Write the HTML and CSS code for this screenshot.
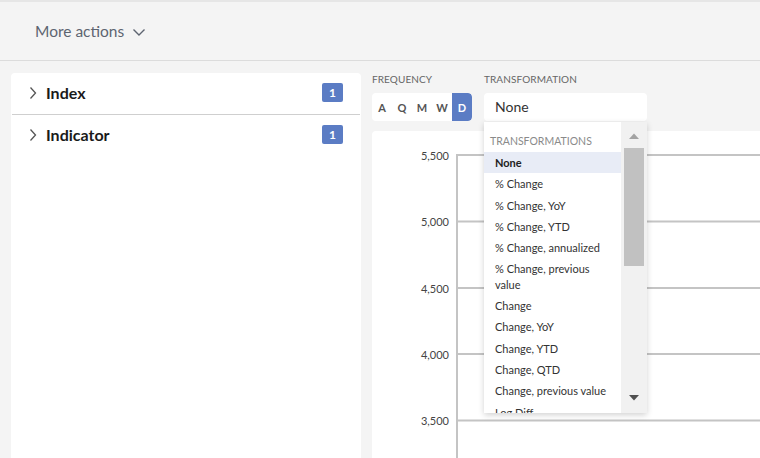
FILE: index.html
```html
<!DOCTYPE html>
<html lang="en">
<head>
<meta charset="utf-8">
<title>Series</title>
<link rel="stylesheet" href="styles.css">
</head>
<body>
<header class="topbar">
  <button class="more-actions">More actions
    <svg class="chev-down" width="14" height="9" viewBox="0 0 14 9"><path d="M1.5 1.5 L7 7 L12.5 1.5" fill="none" stroke="#5d6470" stroke-width="1.4"/></svg>
  </button>
</header>
<main class="main">
  <section class="panel">
    <div class="row">
      <svg class="chev-right" width="8" height="14" viewBox="0 0 8 14"><path d="M1.5 1.5 L6.5 7 L1.5 12.5" fill="none" stroke="#555" stroke-width="1.3"/></svg>
      <span class="row-title">Index</span>
      <span class="badge">1</span>
    </div>
    <div class="divider"></div>
    <div class="row">
      <svg class="chev-right" width="8" height="14" viewBox="0 0 8 14"><path d="M1.5 1.5 L6.5 7 L1.5 12.5" fill="none" stroke="#555" stroke-width="1.3"/></svg>
      <span class="row-title">Indicator</span>
      <span class="badge">1</span>
    </div>
  </section>
  <section class="work">
    <div class="controls">
      <div class="field">
        <div class="label">Frequency</div>
        <div class="freq">
          <span class="freq-btn">A</span>
          <span class="freq-btn">Q</span>
          <span class="freq-btn">M</span>
          <span class="freq-btn">W</span>
          <span class="freq-btn active">D</span>
        </div>
      </div>
      <div class="field transform">
        <div class="label">Transformation</div>
        <div class="select">None</div>
        <div class="dropdown">
          <div class="list">
            <div class="list-head">Transformations</div>
            <div class="item selected">None</div>
            <div class="item">% Change</div>
            <div class="item">% Change, YoY</div>
            <div class="item">% Change, YTD</div>
            <div class="item">% Change, annualized</div>
            <div class="item">% Change, previous<br>value</div>
            <div class="item">Change</div>
            <div class="item">Change, YoY</div>
            <div class="item">Change, YTD</div>
            <div class="item">Change, QTD</div>
            <div class="item">Change, previous value</div>
            <div class="item">Log Diff</div>
          </div>
          <div class="scrollbar">
            <svg class="arrow" width="10" height="6" viewBox="0 0 10 6"><path d="M0 6 L5 0.5 L10 6 Z" fill="#a3a3a3"/></svg>
            <div class="thumb-track"><div class="thumb"></div></div>
            <svg class="arrow" width="10" height="6" viewBox="0 0 10 6"><path d="M0 0 L5 5.5 L10 0 Z" fill="#505050"/></svg>
          </div>
        </div>
      </div>
    </div>
    <div class="chart-card">
      <svg class="chart" width="400" height="330" viewBox="0 0 400 330">
        <g stroke="#c4c4c4" stroke-width="2" fill="none">
          <line x1="85" y1="24" x2="400" y2="24"/>
          <line x1="85" y1="90.5" x2="400" y2="90.5"/>
          <line x1="85" y1="157" x2="400" y2="157"/>
          <line x1="85" y1="223" x2="400" y2="223"/>
          <line x1="85" y1="289.5" x2="400" y2="289.5"/>
          <line x1="85" y1="23" x2="85" y2="330"/>
        </g>
        <g class="ticks" text-anchor="end">
          <text x="77" y="29">5,500</text>
          <text x="77" y="95">5,000</text>
          <text x="77" y="162">4,500</text>
          <text x="77" y="228">4,000</text>
          <text x="77" y="294">3,500</text>
        </g>
      </svg>
    </div>
  </section>
</main>
</body>
</html>
```
FILE: styles.css
```css
* { box-sizing: border-box; }
html, body {
  margin: 0;
  height: 100%;
  overflow: hidden;
}
body {
  background: #f4f4f4;
  font-family: Lato, "Noto Sans", sans-serif;
  color: #333;
}
.topbar {
  height: 61px;
  border-top: 2px solid #e6e6e6;
  border-bottom: 1px solid #dcdcdc;
  display: flex;
  align-items: center;
  padding-left: 35px;
}
.more-actions {
  background: none;
  border: 0;
  padding: 0;
  font-family: inherit;
  font-size: 15.5px;
  color: #5d6470;
  display: flex;
  align-items: center;
  gap: 8px;
}
.chev-down { margin-top: 2px; }
.main {
  display: flex;
  gap: 11px;
  padding: 12px 0 0 11px;
  height: calc(100% - 61px);
}
.panel {
  width: 350px;
  background: #fff;
  border-radius: 4px 4px 0 0;
  flex-shrink: 0;
}
.row {
  height: 41px;
  display: flex;
  align-items: center;
  padding: 0 18px 2px 18px;
}
.chev-right { margin-right: 9px; }
.row-title {
  font-weight: 700;
  font-size: 16px;
  color: #1a1a1a;
  flex: 1;
}
.badge {
  width: 21px;
  height: 19px;
  background: #5b7cc4;
  color: #fff;
  border-radius: 2px;
  font-size: 12px;
  font-weight: 700;
  display: flex;
  align-items: center;
  justify-content: center;
}
.divider {
  height: 1px;
  background: #cfcfcf;
  margin: 0 1px;
}
.work {
  flex: 1;
  display: flex;
  flex-direction: column;
  gap: 10px;
  min-width: 0;
}
.controls {
  display: flex;
  gap: 12px;
}
.field { position: relative; }
.label {
  font-size: 10px;
  line-height: 12px;
  color: #666;
  text-transform: uppercase;
  margin-bottom: 8px;
  letter-spacing: 0.1px;
}
.freq {
  width: 100px;
  height: 28px;
  background: #fff;
  border-radius: 4px;
  display: flex;
  overflow: hidden;
}
.freq-btn {
  width: 20px;
  display: flex;
  align-items: center;
  justify-content: center;
  font-size: 11px;
  font-weight: 700;
  color: #555;
}
.freq-btn.active {
  background: #5b7cc4;
  color: #fff;
  border-radius: 0 4px 4px 0;
}
.transform { width: 163px; }
.select {
  height: 28px;
  background: #fff;
  border-radius: 4px;
  font-size: 14px;
  color: #333;
  padding: 0 0 2px 11px;
  display: flex;
  align-items: center;
}
.dropdown {
  position: absolute;
  left: 0;
  top: 49px;
  width: 163px;
  height: 291px;
  background: #fff;
  box-shadow: 0 2px 6px rgba(0,0,0,0.18);
  display: flex;
  z-index: 5;
}
.list {
  flex: 1;
  overflow: hidden;
}
.list-head {
  padding: 12px 6px 4px;
  font-size: 10.5px;
  line-height: 14px;
  color: #8a8a8a;
  text-transform: uppercase;
}
.item {
  padding: 3px 11px;
  font-size: 11px;
  line-height: 15.3px;
  color: #333;
  white-space: nowrap;
}
.item.selected {
  background: #e8ecf6;
  font-weight: 700;
  color: #222;
}
.scrollbar {
  width: 26px;
  background: #f1f1f1;
  display: flex;
  flex-direction: column;
  align-items: center;
  padding: 11px 0 12px;
}
.arrow { flex-shrink: 0; }
.thumb-track {
  flex: 1;
  width: 100%;
  padding: 9px 3px 0;
}
.thumb {
  height: 118px;
  background: #c1c1c1;
}
.chart-card {
  flex: 1;
  background: #fff;
  border-radius: 4px 0 0 0;
  overflow: hidden;
}
.chart { display: block; }
.ticks text {
  font-size: 11px;
  fill: #444;
  font-family: Lato, "Noto Sans", sans-serif;
}
```
